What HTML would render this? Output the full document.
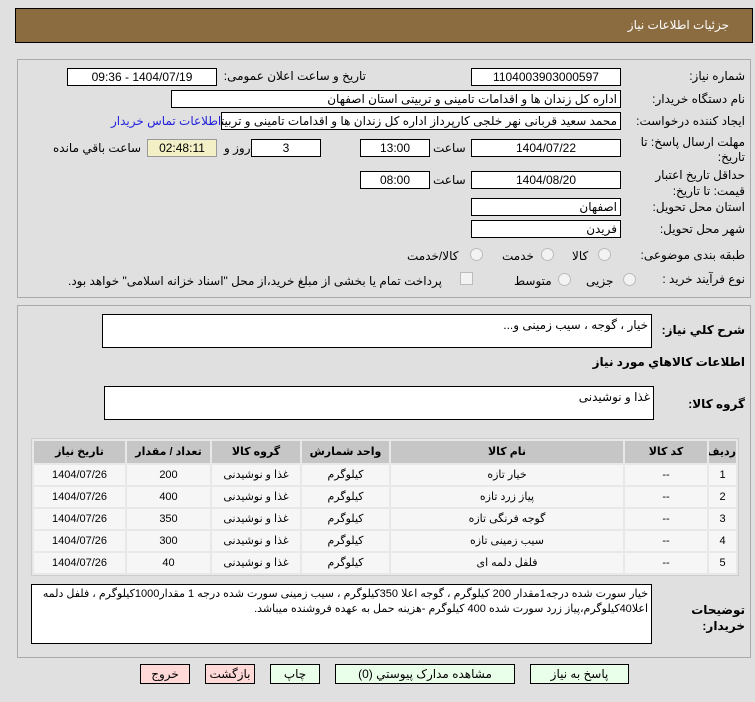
<!DOCTYPE html>
<html><head><meta charset="utf-8"><style>
body{margin:0;width:755px;height:702px;background:#e0e0e0;font-family:"Liberation Sans","DejaVu Sans",sans-serif;font-size:12px;color:#000;position:relative;overflow:hidden;direction:rtl}
.a{position:absolute;white-space:nowrap}
.box{position:absolute;background:#fff;border:1px solid #000;box-sizing:border-box;font-size:12px;line-height:16px;text-align:center;overflow:hidden;white-space:nowrap}
.r{text-align:right;padding-right:3px}
.lbl{position:absolute;font-size:12px;white-space:nowrap;line-height:15px}
.panel{position:absolute;border:1px solid #aaa;box-sizing:border-box}
.rad{position:absolute;width:11px;height:11px;border-radius:50%;border:1px solid #bbb;background:#f3f3f3}
table{border-collapse:separate;border-spacing:2px;position:absolute;left:31px;top:438px;width:708px;background:#e8e8e8;border:1px solid #ccc;table-layout:fixed}
th{background:#c6c6c6;height:22px;padding:0;font-size:11px;font-weight:bold;line-height:14px;overflow:hidden;white-space:nowrap}
td{background:#f6f6f6;height:20px;padding:0;text-align:center;font-size:11px;line-height:14px}
.btn{position:absolute;top:664px;height:20px;border:1px solid #000;box-sizing:border-box;font-size:12px;text-align:center;line-height:18px;background:#eaffea}
.pk{background:#ffd8d8}
</style></head><body>
<div class="a" style="left:15px;top:8px;width:738px;height:35px;background:#8b6b40;border:1px solid #000;box-sizing:border-box"></div>
<div class="a" style="right:26px;top:18px;color:#fff;font-size:12px">جزئیات اطلاعات نیاز</div>

<div class="panel" style="left:17px;top:59px;width:734px;height:239px"></div>
<div class="lbl" style="right:10px;top:69px">شماره نیاز:</div>
<div class="box" style="left:471px;top:68px;width:150px;height:18px">1104003903000597</div>
<div class="lbl" style="right:389px;top:69px">تاریخ و ساعت اعلان عمومی:</div>
<div class="box" style="left:67px;top:68px;width:150px;height:18px">1404/07/19 - 09:36</div>

<div class="lbl" style="right:10px;top:92px">نام دستگاه خریدار:</div>
<div class="box r" style="left:171px;top:90px;width:450px;height:18px">اداره کل زندان ها و اقدامات تامینی و تربیتی استان اصفهان</div>

<div class="lbl" style="right:10px;top:114px">ایجاد کننده درخواست:</div>
<div class="box r" style="left:221px;top:112px;width:400px;height:18px">محمد سعید قربانی نهر خلجی کارپرداز اداره کل زندان ها و اقدامات تامینی و تربیتی</div>
<div class="lbl" style="left:111px;top:114px;color:#2222dd">اطلاعات تماس خریدار</div>

<div class="lbl" style="right:10px;top:135px;text-align:right">مهلت ارسال پاسخ: تا<br>تاریخ:</div>
<div class="box" style="left:471px;top:139px;width:150px;height:18px">1404/07/22</div>
<div class="lbl" style="left:433px;top:141px">ساعت</div>
<div class="box" style="left:360px;top:139px;width:70px;height:18px">13:00</div>
<div class="box" style="left:251px;top:139px;width:70px;height:18px">3</div>
<div class="lbl" style="left:224px;top:141px">روز و</div>
<div class="box" style="left:147px;top:139px;width:70px;height:18px;background:#f3f0c8;border-color:#999">02:48:11</div>
<div class="lbl" style="left:53px;top:141px">ساعت باقي مانده</div>

<div class="lbl" style="right:10px;top:167px;text-align:right;line-height:16px">حداقل تاریخ اعتبار<br>قیمت: تا تاریخ:</div>
<div class="box" style="left:471px;top:171px;width:150px;height:18px">1404/08/20</div>
<div class="lbl" style="left:433px;top:173px">ساعت</div>
<div class="box" style="left:360px;top:171px;width:70px;height:18px">08:00</div>

<div class="lbl" style="right:10px;top:200px">استان محل تحویل:</div>
<div class="box r" style="left:471px;top:198px;width:150px;height:18px">اصفهان</div>
<div class="lbl" style="right:10px;top:222px">شهر محل تحویل:</div>
<div class="box r" style="left:471px;top:220px;width:150px;height:18px">فریدن</div>

<div class="lbl" style="right:10px;top:248px">طبقه بندی موضوعی:</div>
<div class="rad" style="left:598px;top:248px"></div><div class="lbl" style="left:572px;top:249px">کالا</div>
<div class="rad" style="left:541px;top:248px"></div><div class="lbl" style="left:502px;top:249px">خدمت</div>
<div class="rad" style="left:470px;top:248px"></div><div class="lbl" style="left:407px;top:249px">کالا/خدمت</div>

<div class="lbl" style="right:10px;top:272px">نوع فرآیند خرید :</div>
<div class="rad" style="left:623px;top:273px"></div><div class="lbl" style="left:586px;top:274px">جزیی</div>
<div class="rad" style="left:558px;top:273px"></div><div class="lbl" style="left:514px;top:274px">متوسط</div>
<div class="a" style="left:460px;top:272px;width:11px;height:11px;border:1px solid #bbb;background:#f3f3f3"></div>
<div class="lbl" style="left:68px;top:274px">پرداخت تمام یا بخشی از مبلغ خرید،از محل "اسناد خزانه اسلامی" خواهد بود.</div>

<div class="panel" style="left:17px;top:305px;width:734px;height:353px"></div>
<div class="lbl" style="right:10px;top:323px;font-weight:bold">شرح کلي نياز:</div>
<div class="box r" style="left:102px;top:314px;width:550px;height:34px;text-align:right;padding-top:2px">خیار ، گوجه ، سیب زمینی و...</div>
<div class="lbl" style="right:10px;top:355px;font-weight:bold">اطلاعات کالاهاي مورد نياز</div>
<div class="lbl" style="right:10px;top:397px;font-weight:bold">گروه کالا:</div>
<div class="box r" style="left:104px;top:386px;width:550px;height:34px;text-align:right;padding-top:2px">غذا و نوشیدنی</div>

<table>
<colgroup><col style="width:27px"><col style="width:82px"><col style="width:232px"><col style="width:87px"><col style="width:88px"><col style="width:83px"><col style="width:91px"></colgroup>
<tr><th>ردیف</th><th>کد کالا</th><th>نام کالا</th><th>واحد شمارش</th><th>گروه کالا</th><th>تعداد / مقدار</th><th>تاریخ نیاز</th></tr>
<tr><td>1</td><td>--</td><td>خیار تازه</td><td>کیلوگرم</td><td>غذا و نوشیدنی</td><td>200</td><td>1404/07/26</td></tr>
<tr><td>2</td><td>--</td><td>پیاز زرد تازه</td><td>کیلوگرم</td><td>غذا و نوشیدنی</td><td>400</td><td>1404/07/26</td></tr>
<tr><td>3</td><td>--</td><td>گوجه فرنگی تازه</td><td>کیلوگرم</td><td>غذا و نوشیدنی</td><td>350</td><td>1404/07/26</td></tr>
<tr><td>4</td><td>--</td><td>سیب زمینی تازه</td><td>کیلوگرم</td><td>غذا و نوشیدنی</td><td>300</td><td>1404/07/26</td></tr>
<tr><td>5</td><td>--</td><td>فلفل دلمه ای</td><td>کیلوگرم</td><td>غذا و نوشیدنی</td><td>40</td><td>1404/07/26</td></tr>
</table>

<div class="lbl" style="right:10px;top:602px;font-weight:bold;line-height:16px">توضیحات<br>خریدار:</div>
<div class="box r" style="left:31px;top:584px;width:621px;height:60px;text-align:right;white-space:normal;font-size:11px;line-height:15px;padding:2px 3px">خیار سورت شده درجه1مقدار 200 کیلوگرم ، گوجه اعلا 350کیلوگرم ، سیب زمینی سورت شده درجه 1 مقدار1000کیلوگرم ، فلفل دلمه اعلا40کیلوگرم،پیاز زرد سورت شده 400 کیلوگرم -هزینه حمل به عهده فروشنده میباشد.</div>

<div class="btn" style="left:530px;width:99px">پاسخ به نیاز</div>
<div class="btn" style="left:335px;width:180px">مشاهده مدارک پیوستي (0)</div>
<div class="btn" style="left:270px;width:50px">چاپ</div>
<div class="btn pk" style="left:205px;width:50px">بازگشت</div>
<div class="btn pk" style="left:140px;width:50px">خروج</div>
</body></html>
